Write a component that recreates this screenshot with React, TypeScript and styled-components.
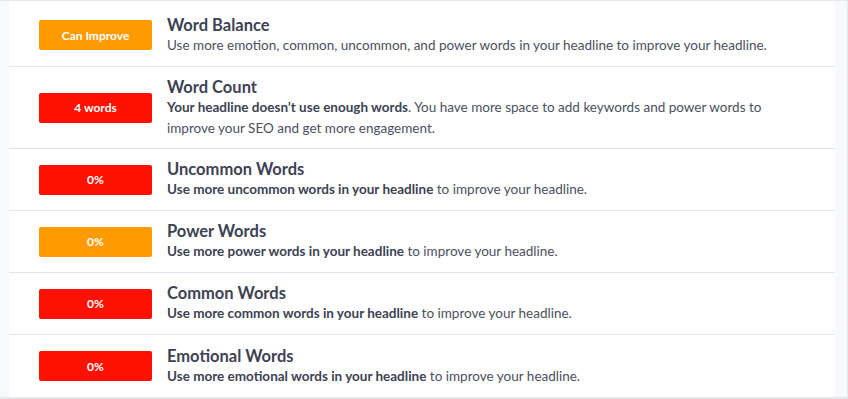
import React, { FC } from 'react';
import styled, { createGlobalStyle } from 'styled-components';

const GlobalStyle = createGlobalStyle`
  html, body {
    margin: 0;
    padding: 0;
    background: #ffffff;
  }
  body {
    font-family: Lato, "Open Sans", "Liberation Sans", sans-serif;
    -webkit-font-smoothing: antialiased;
  }
`;

type Level = 'warn' | 'bad';

interface Check {
  badge: string;
  level: Level;
  title: string;
  strong?: string;
  text: string;
}

const checks: Check[] = [
  {
    badge: 'Can Improve',
    level: 'warn',
    title: 'Word Balance',
    text: 'Use more emotion, common, uncommon, and power words in your headline to improve your headline.',
  },
  {
    badge: '4 words',
    level: 'bad',
    title: 'Word Count',
    strong: 'Your headline doesn’t use enough words',
    text: '. You have more space to add keywords and power words to improve your SEO and get more engagement.',
  },
  {
    badge: '0%',
    level: 'bad',
    title: 'Uncommon Words',
    strong: 'Use more uncommon words in your headline',
    text: ' to improve your headline.',
  },
  {
    badge: '0%',
    level: 'warn',
    title: 'Power Words',
    strong: 'Use more power words in your headline',
    text: ' to improve your headline.',
  },
  {
    badge: '0%',
    level: 'bad',
    title: 'Common Words',
    strong: 'Use more common words in your headline',
    text: ' to improve your headline.',
  },
  {
    badge: '0%',
    level: 'bad',
    title: 'Emotional Words',
    strong: 'Use more emotional words in your headline',
    text: ' to improve your headline.',
  },
];

const Frame = styled.div`
  box-sizing: border-box;
  width: 848px;
  height: 399px;
  border-top: 1px solid #e6e8ec;
  border-right: 1px solid #e6e8ec;
  border-bottom: 2px solid #e6e8ec;
  background: #f8f9fd;
  padding: 0 12px 0 9px;
`;

const Panel = styled.div`
  background: #ffffff;
  height: 100%;
  display: flex;
  flex-direction: column;
`;

const Row = styled.div<{ $h: number }>`
  display: flex;
  align-items: center;
  gap: 15px;
  height: ${p => p.$h}px;
  padding-left: 30px;
  box-sizing: border-box;
  border-bottom: 1px solid #dfe6f4;

  &:first-child {
    padding-top: 3px;
  }

  &:last-child {
    border-bottom: none;
    flex: 1;
  }
`;

const Badge = styled.div<{ $level: Level }>`
  flex: none;
  width: 113px;
  height: 30px;
  border-radius: 2px;
  background: ${p => (p.$level === 'warn' ? '#ff9a00' : '#ff1000')};
  color: #ffffff;
  font-size: 12px;
  font-weight: 700;
  display: flex;
  align-items: center;
  justify-content: center;
`;

const Body = styled.div`
  display: flex;
  flex-direction: column;
  max-width: 614px;
`;

const Title = styled.div`
  font-size: 16.5px;
  font-weight: 700;
  color: #3d4253;
  line-height: 20px;
`;

const Desc = styled.div`
  font-size: 13.5px;
  color: #4b5060;
  line-height: 21px;

  strong {
    font-weight: 700;
    color: #3d4253;
  }
`;

const heights = [66, 82, 62, 62, 62, 62];

const App: FC = () => {
  return (
    <>
      <GlobalStyle />
      <Frame>
        <Panel>
          {checks.map((c, i) => (
            <Row key={c.title} $h={heights[i]}>
              <Badge $level={c.level}>{c.badge}</Badge>
              <Body>
                <Title>{c.title}</Title>
                <Desc>
                  {c.strong && <strong>{c.strong}</strong>}
                  {c.text}
                </Desc>
              </Body>
            </Row>
          ))}
        </Panel>
      </Frame>
    </>
  );
};

export default App;
